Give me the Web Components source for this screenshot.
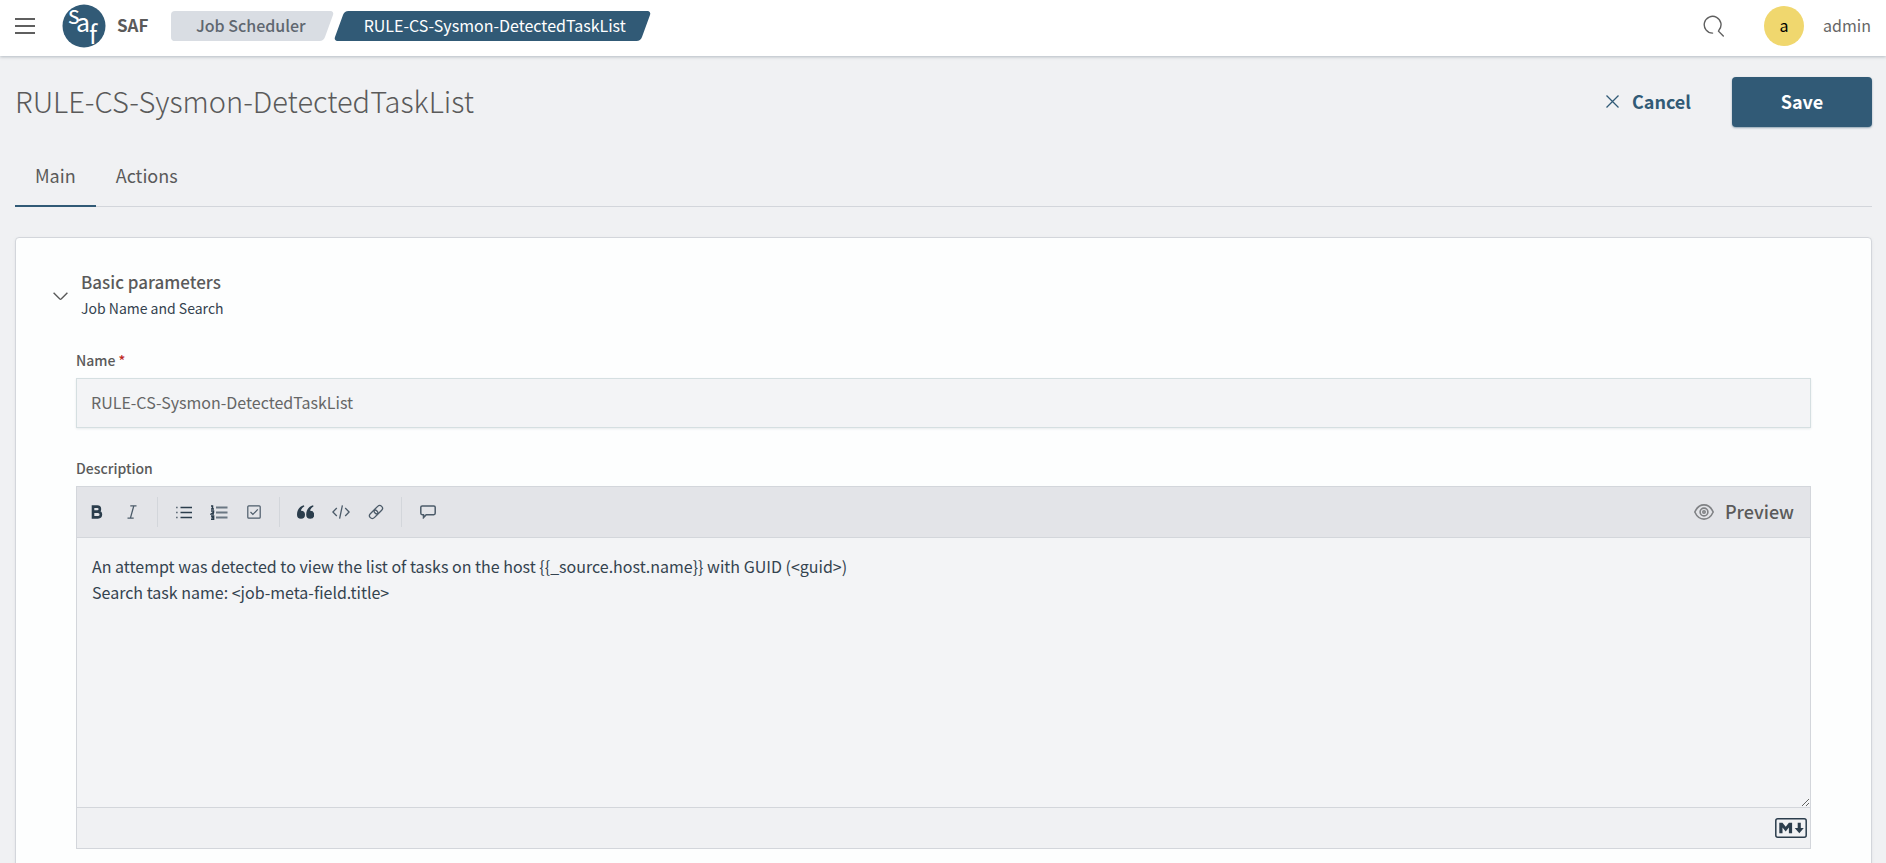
<!DOCTYPE html>
<html lang="en">
<head>
<meta charset="utf-8">
<title>RULE-CS-Sysmon-DetectedTaskList - SAF</title>
<style>
  body {
    margin: 0;
    background: #f0f1f3;
    color: #343741;
    font-family: "Noto Sans CJK SC", "Noto Sans", sans-serif;
    font-size: 16px;
    line-height: 24px;
    --primary: #315a76;
    --border: #d3d6db;
    --text: #5a5a5a;
  }
</style>
</head>
<body>
<saf-app></saf-app>

<script>
const define = (name, html, setup) => {
  const template = document.createElement('template');
  template.innerHTML = html;
  customElements.define(name, class extends HTMLElement {
    constructor() {
      super();
      this.attachShadow({ mode: 'open' }).append(template.content.cloneNode(true));
    }
    connectedCallback() {
      if (setup) setup(this, this.shadowRoot);
    }
  });
};

define('saf-logo', `
  <style>
    :host { display: block; width: 44px; height: 44px; }
    svg { display: block; overflow: visible; }
    text { font-family: "Noto Sans CJK SC", sans-serif; font-weight: 400; fill: #fff; }
  </style>
  <svg width="44" height="44" viewBox="0 0 44 44" role="img" aria-label="SAF logo">
    <circle cx="22" cy="22" r="21.5" fill="#315a76"/>
    <text x="6" y="20" font-size="25">s</text>
    <text x="14" y="28" font-size="25">a</text>
    <text x="27" y="40" font-size="25">f</text>
  </svg>`);

define('saf-crumb', `
  <style>
    :host { display: block; position: relative; height: 30px; }
    :host::before {
      content: ""; position: absolute; inset: 0 5px; z-index: 0;
      background: var(--crumb-bg, #d9dde3);
      border-radius: 4px; transform: skewX(-20deg);
    }
    :host([first])::after {
      content: ""; position: absolute; inset: 0 50% 0 0; z-index: 0;
      background: var(--crumb-bg, #d9dde3); border-radius: 4px 0 0 4px;
    }
    :host([current]) { --crumb-bg: var(--primary); }
    a {
      position: relative; z-index: 1; display: block; padding: 0 28px 0 25px;
      color: #5f6770; font-weight: 500; font-size: 16px; line-height: 28px;
      text-decoration: none; white-space: nowrap;
    }
    :host([current]) a { color: #fff; font-weight: 400; padding: 0 25px 0 30px; }
  </style>
  <a href="#"><slot></slot></a>`);

define('saf-header', `
  <style>
    :host {
      display: flex; align-items: flex-start; height: 56px; padding: 0 15px;
      background: #fff; position: relative; z-index: 1; box-sizing: border-box;
      box-shadow: 0 1px 3px rgba(90, 105, 120, .4);
    }
    button { border: 0; background: none; padding: 0; display: flex; cursor: pointer; }
    saf-logo { margin-left: 27px; }
    .brand { margin: 0 22px 0 11px; width: 32px; font-weight: 700; font-size: 17px; color: var(--text); text-decoration: none; line-height: 50px; height: 52px; }
    .left, .right { display: flex; align-items: center; height: 52px; }
    nav { display: flex; }
    .right { margin-left: auto; }
    .avatar {
      margin: 0 19px 0 39px; width: 40px; height: 40px; border-radius: 50%;
      background: #f0d76e; color: #000; text-align: center; line-height: 38px; font-size: 16px;
    }
    .user { color: #666; font-size: 16px; line-height: 50px; height: 52px; }
  </style>
  <div class="left">
    <button aria-label="Toggle menu">
      <svg width="20" height="18" viewBox="0 0 20 18"><path d="M0 2h20M0 9h20M0 16h20" stroke="#5f5f5f" stroke-width="2"/></svg>
    </button>
    <saf-logo></saf-logo>
    <a class="brand" href="#">SAF</a>
    <nav aria-label="Breadcrumbs">
      <saf-crumb first>Job Scheduler</saf-crumb>
      <saf-crumb current>RULE-CS-Sysmon-DetectedTaskList</saf-crumb>
    </nav>
  </div>
  <div class="right">
    <button aria-label="Search">
      <svg width="22" height="22" viewBox="0 0 22 22" fill="none" stroke="#5f5f5f" stroke-width="1.4" stroke-linecap="round">
        <path d="M9.6 18.1A8.4 8.4 0 1 1 15.9 15.3L15.5 16.2L20.3 20.9"/>
      </svg>
    </button>
    <div class="avatar">a</div>
    <span class="user">admin</span>
  </div>`);

define('saf-title-bar', `
  <style>
    :host { display: flex; align-items: center; height: 50px; padding-top: 21px; }
    h1 { margin: 0; font-weight: 200; font-size: 29px; line-height: 46px; height: 50px; color: var(--text); white-space: nowrap; }
    .actions { margin-left: auto; display: flex; gap: 41px; }
    button { font: inherit; font-weight: 600; font-size: 18px; line-height: 46px; height: 50px; border: 0; padding: 0 0 2px; box-sizing: border-box; cursor: pointer; }
    .cancel { display: flex; align-items: center; gap: 13px; background: none; color: var(--primary); }
    .save { width: 140px; background: var(--primary); color: #fff; border-radius: 4px; box-shadow: 0 1px 2px rgba(49, 90, 118, .5); }
  </style>
  <h1><slot></slot></h1>
  <div class="actions">
    <button class="cancel">
      <svg width="13" height="13" viewBox="0 0 13 13"><path d="M.5.5l12 12M12.5.5l-12 12" stroke="#315a76" stroke-width="1.3"/></svg>
      Cancel
    </button>
    <button class="save">Save</button>
  </div>`);

define('saf-tabs', `
  <style>
    :host { display: flex; margin-top: 30px; height: 50px; box-shadow: inset 0 -1px var(--border); }
    ::slotted(button) {
      font: inherit; font-size: 18px; line-height: 24px; color: var(--text);
      background: none; border: 0; padding: 0 20px 12px; margin: 0; cursor: pointer;
      border-bottom: 2px solid transparent;
    }
    ::slotted(button[aria-selected="true"]) { border-bottom-color: var(--primary); }
  </style>
  <slot></slot>`);

define('saf-panel', `
  <style>
    :host {
      display: block; margin-top: 30px; padding: 30px 60px 30px;
      background: #fdfefe; border: 1px solid var(--border); border-radius: 4px;
      box-shadow: 0 1px 3px rgba(90, 105, 120, .1);
    }
    header { display: flex; align-items: center; margin-left: -23px; gap: 13px; }
    header button { border: 0; background: none; padding: 4px 0 0; display: flex; cursor: pointer; }
    h2 { margin: 0; font-size: 17px; line-height: 28px; font-weight: 500; color: var(--text); }
    p { margin: 0; font-size: 14px; line-height: 24px; color: #34424f; }
  </style>
  <header>
    <button aria-label="Collapse section">
      <svg width="15" height="9" viewBox="0 0 15 9"><path d="M.6.8l6 6q.9.8 1.8 0l6-6" fill="none" stroke="#5a5a5a" stroke-width="1.4"/></svg>
    </button>
    <div><h2><slot name="title"></slot></h2><p><slot name="subtitle"></slot></p></div>
  </header>
  <slot></slot>`);

define('saf-text-field', `
  <style>
    :host { display: block; margin-top: 28px; }
    label { display: block; font-size: 14px; line-height: 24px; font-weight: 500; color: var(--text); margin-bottom: 6px; }
    .req { color: #bd271e; }
    input {
      display: block; width: 100%; height: 50px; box-sizing: border-box; padding: 0 14px 2px;
      border: 1px solid #d5dfe1; border-radius: 0; background: #f3f4f6; outline: 0;
      font: inherit; font-size: 16px; color: #666; box-shadow: 0 1px 2px rgba(90, 105, 120, .12);
    }
  </style>
  <label for="field"><span class="label"></span> <span class="req">*</span></label>
  <input id="field" type="text" readonly>`, (host, root) => {
    root.querySelector('.label').textContent = host.getAttribute('label');
    root.querySelector('input').value = host.getAttribute('value');
  });

define('saf-markdown-editor', `
  <style>
    :host { display: block; margin-top: 28px; }
    label { display: block; font-size: 14px; line-height: 24px; font-weight: 500; color: var(--text); margin-bottom: 6px; }
    .editor { border: 1px solid var(--border); }
    .toolbar { display: flex; align-items: center; height: 50px; background: #e3e4e8; border-bottom: 1px solid var(--border); padding: 0 16px 0 2px; }
    .toolbar button { width: 35px; height: 30px; padding: 0; border: 0; background: none; display: flex; align-items: center; justify-content: center; cursor: pointer; }
    .sep { width: 1px; height: 30px; background: var(--border); margin: 0 8px; }
    .toolbar .preview { margin-left: auto; width: auto; gap: 11px; font: inherit; font-size: 18px; line-height: 28px; font-weight: 500; color: var(--text); }
    .preview span { padding-bottom: 2px; }
    svg { display: block; fill: none; stroke: #4c5b69; }
    textarea {
      display: block; width: 100%; height: 269px; box-sizing: border-box; margin: 0; padding: 15px;
      border: 0; border-radius: 0; outline: 0; resize: vertical; background: #f3f4f6;
      font: inherit; font-size: 16px; line-height: 26px; color: #34434f;
    }
    footer { display: flex; align-items: center; justify-content: flex-end; height: 40px; padding: 0 3px; border-top: 1px solid var(--border); background: #f0f1f3; }
  </style>
  <label for="text"></label>
  <div class="editor">
    <div class="toolbar">
      <button aria-label="Bold"><svg width="16" height="16" viewBox="0 0 16 16" style="stroke:#2b3d4c" stroke-width="2.6"><path d="M4 2.6h4.3q2.6 0 2.6 2.5t-2.6 2.5H4zM4 7.8h4.9q3 0 3 2.8t-3 2.8H4z"/></svg></button>
      <button aria-label="Italic"><svg width="16" height="16" viewBox="0 0 16 16" stroke-width="1.3"><path d="M6.3 1.8h6.2M3.5 14.2h6.2M9.8 1.8L6.4 14.2"/></svg></button>
      <span class="sep"></span>
      <button aria-label="Bulleted list"><svg width="16" height="16" viewBox="0 0 16 16" stroke-width="1.4" style="stroke:#2b3d4c"><path d="M4.5 3.5h11.5M4.5 8.5h11.5M4.5 13.5h11.5"/><path d="M0 3.5h1.7M0 8.5h1.7M0 13.5h1.7" opacity=".7"/></svg></button>
      <button aria-label="Numbered list"><svg width="18" height="16" viewBox="0 0 18 16" stroke-width="1.5"><path d="M6 3.5h11.5M6 8.5h11.5M6 13.5h11.5" stroke-width="1.9" opacity=".8"/><path d="M1 2h1.5v3M1 5h3M1 7h2.5v1.3L1.2 10H4M1 12h2.6v3.2H1M1.5 13.6h2" style="stroke:#2b3d4c"/></svg></button>
      <button aria-label="Task list"><svg width="14" height="14" viewBox="0 0 14 14" stroke-width="1.2"><rect x=".8" y=".8" width="12.4" height="12.4" rx="1"/><path d="M3.5 7l2.4 2.4L10.8 4.4"/></svg></button>
      <span class="sep"></span>
      <button aria-label="Quote"><svg width="17" height="15" viewBox="0 0 17 15" style="fill:#2b3d4c;stroke:none"><path d="M7.4 1.2Q4.3 2.8 4 5.8A4 4 0 1 1 0 9.8C0 4.8 2.4 1.4 6.8.2z"/><path d="M16.6 1.2Q13.5 2.8 13.2 5.8A4 4 0 1 1 9.2 9.8C9.2 4.8 11.6 1.4 16 .2z"/></svg></button>
      <button aria-label="Code"><svg width="18" height="14" viewBox="0 0 18 14" stroke-width="1.3"><path d="M4.8 3L.9 7l3.9 4M13.2 3l3.9 4-3.9 4M10.4.3L7.6 13.7"/></svg></button>
      <button aria-label="Link"><svg width="16" height="16" viewBox="0 0 16 16" stroke-width="1.3"><g transform="rotate(-45 8 8)"><rect x="0" y="5.2" width="9.4" height="5.6" rx="2.8"/><rect x="6.6" y="5.2" width="9.4" height="5.6" rx="2.8"/></g></svg></button>
      <span class="sep"></span>
      <button aria-label="Comment"><svg width="16" height="14" viewBox="0 0 16 14" stroke-width="1.5"><path d="M2.2.9h11.6q1.4 0 1.4 1.4v6q0 1.4-1.4 1.4H6.2L3.5 12.6V9.7H2.2Q.8 9.7.8 8.3v-6Q.8.9 2.2.9z"/></svg></button>
      <button class="preview"><svg width="20" height="16" viewBox="0 0 20 16" stroke-width="1.6" style="stroke:#808285"><path d="M.8 8Q4 .9 10 .9T19.2 8Q16 15.1 10 15.1T.8 8z"/><circle cx="10" cy="8" r="3.9"/><circle cx="10" cy="8" r="1.2"/></svg><span>Preview</span></button>
    </div>
    <textarea id="text" spellcheck="false"></textarea>
    <footer>
      <svg width="32" height="20" viewBox="0 0 32 20" role="img" aria-label="Markdown"><rect x=".8" y=".8" width="30.4" height="18.4" rx="2" style="stroke:#2b3d4c" stroke-width="1.5"/><path d="M4.3 15.3V4.7h3.2l3.2 4 3.2-4h3.2v10.6h-3.2V9.5l-3.2 3.9-3.2-3.9v5.8zM22.7 4.7h3.1v5.2h3l-4.5 5.4-4.6-5.4h3z" style="fill:#2b3d4c;stroke:none"/></svg>
    </footer>
  </div>`, (host, root) => {
    root.querySelector('label').textContent = host.getAttribute('label');
    root.querySelector('textarea').value = host.getAttribute('value');
  });

define('saf-app', `
  <style>
    :host { display: block; }
    main { padding: 0 14px 0 15px; }
  </style>
  <saf-header></saf-header>
  <main>
    <saf-title-bar>RULE-CS-Sysmon-DetectedTaskList</saf-title-bar>
    <saf-tabs role="tablist">
      <button role="tab" aria-selected="true">Main</button>
      <button role="tab" aria-selected="false">Actions</button>
    </saf-tabs>
    <saf-panel>
      <span slot="title">Basic parameters</span>
      <span slot="subtitle">Job Name and Search</span>
      <saf-text-field label="Name" value="RULE-CS-Sysmon-DetectedTaskList"></saf-text-field>
      <saf-markdown-editor label="Description" value="An attempt was detected to view the list of tasks on the host {{_source.host.name}} with GUID (&lt;guid&gt;)&#10;Search task name: &lt;job-meta-field.title&gt;"></saf-markdown-editor>
    </saf-panel>
  </main>`);
</script>
</body>
</html>
